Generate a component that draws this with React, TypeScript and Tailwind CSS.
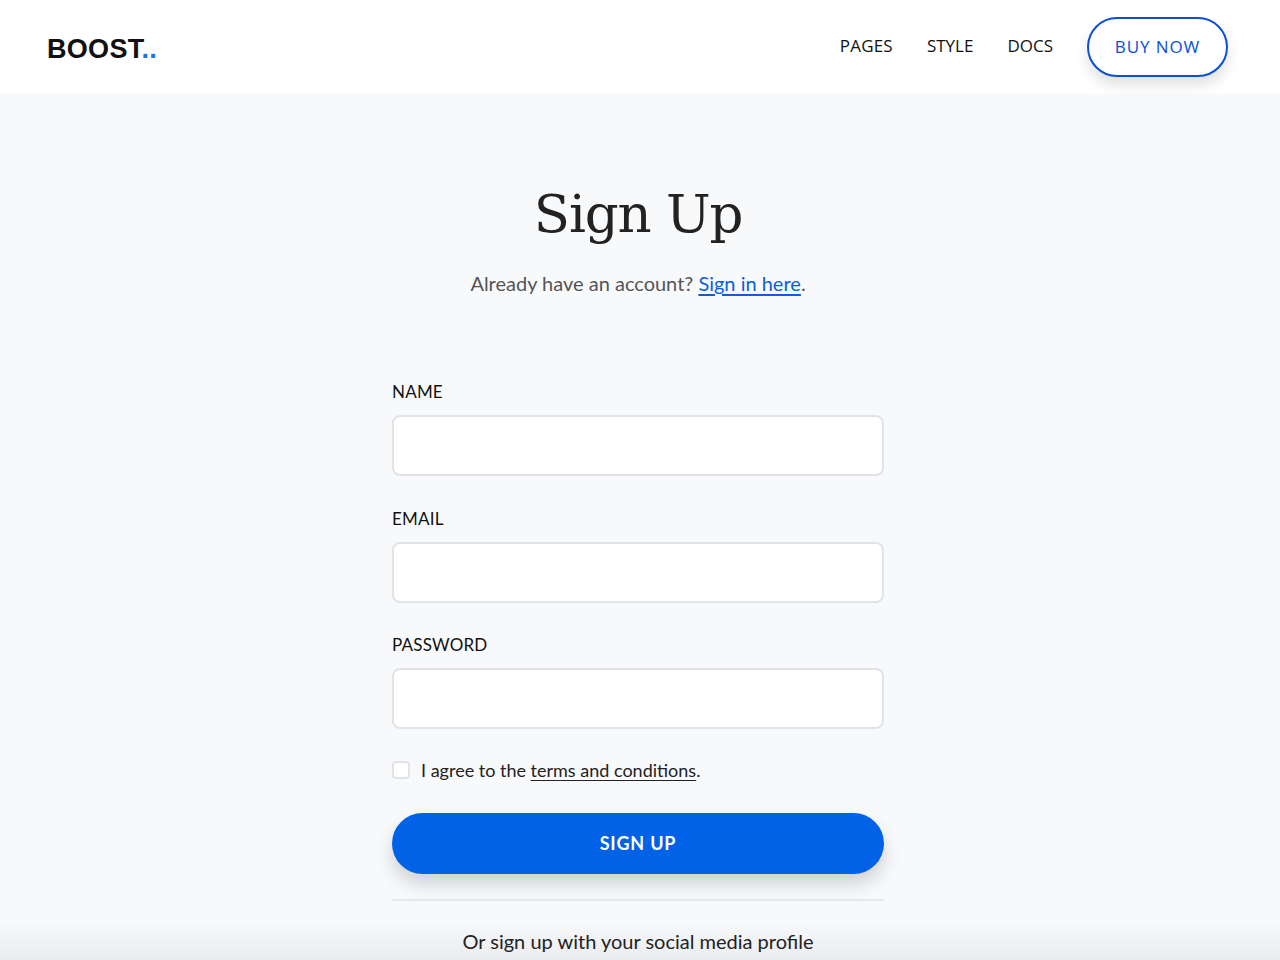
export default function App() {
  const fields = ["NAME", "EMAIL", "PASSWORD"];
  return (
    <div className="min-h-[960px] bg-[#f8f9fb] font-['Lato',sans-serif] text-[#1a1a1a] relative overflow-hidden">
      {/* soft shadow of the next section peeking in at the bottom */}
      <div className="absolute left-0 right-0 bottom-0 h-[40px] bg-gradient-to-b from-transparent to-[#eaecef] pointer-events-none" />

      {/* header */}
      <header className="relative h-[94px] bg-white flex items-center justify-between pl-[47px] pr-[52px]">
        <div className="font-['Liberation_Sans',sans-serif] text-[27px] font-bold tracking-[0.3px] text-[#111] pt-[4px]">
          BOOST<span className="text-[#1a73e8]">..</span>
        </div>
        <nav className="flex items-center font-['Open_Sans',sans-serif] text-[17px] text-[#111] -mt-[2px]">
          <a className="mr-[34px] tracking-[0.2px]">PAGES</a>
          <a className="mr-[34px]">STYLE</a>
          <a className="mr-[34px]">DOCS</a>
          <button className="w-[141px] h-[60px] rounded-full border-2 border-[#0b4fd6] bg-white text-[#0b4fd6] text-[17px] tracking-[0.9px] shadow-[0_8px_14px_rgba(0,0,0,0.12)] mt-[2px]">
            BUY NOW
          </button>
        </nav>
      </header>

      <main className="relative flex flex-col items-center pt-[82px] pr-[4px]">
        <h1 className="font-['DejaVu_Serif',serif] text-[53px] leading-[76px] text-[#222] tracking-[-1.2px]">Sign Up</h1>
        <p className="mt-[16px] text-[20px] text-[#555]">
          Already have an account? <a className="text-[#0b5ed7] underline underline-offset-[3px]">Sign in here</a>.
        </p>

        <form className="w-[492px] mt-[82px] flex flex-col">
          {fields.map((f) => (
            <div key={f} className="flex flex-col mb-[30.5px]">
              <label className="text-[17px] text-[#111] leading-[24px] mb-[11px] tracking-[0.2px]">{f}</label>
              <input
                type={f === "PASSWORD" ? "password" : "text"}
                className="h-[61px] rounded-[8px] border-2 border-[#e2e3e6] bg-white outline-none"
              />
            </div>
          ))}
          <label className="flex items-center -mt-[3px] text-[18px] text-[#222]">
            <span className="w-[18px] h-[18px] rounded-[4px] border-2 border-[#e2e3e6] bg-white mr-[11px]" />
            I agree to the&nbsp;<a className="underline underline-offset-[3px]">terms and conditions</a>.
          </label>
          <button
            type="button"
            className="mt-[29px] h-[61px] rounded-full bg-[#0062e6] text-white text-[18px] font-bold tracking-[0.8px] shadow-[0_10px_18px_rgba(0,0,0,0.16)]"
          >
            SIGN UP
          </button>
          <div className="mt-[25px] h-[2px] bg-[#e6e7ea]" />
          <p className="mt-[25px] text-center text-[20px] text-[#222]">Or sign up with your social media profile</p>
        </form>
      </main>
    </div>
  );
}
